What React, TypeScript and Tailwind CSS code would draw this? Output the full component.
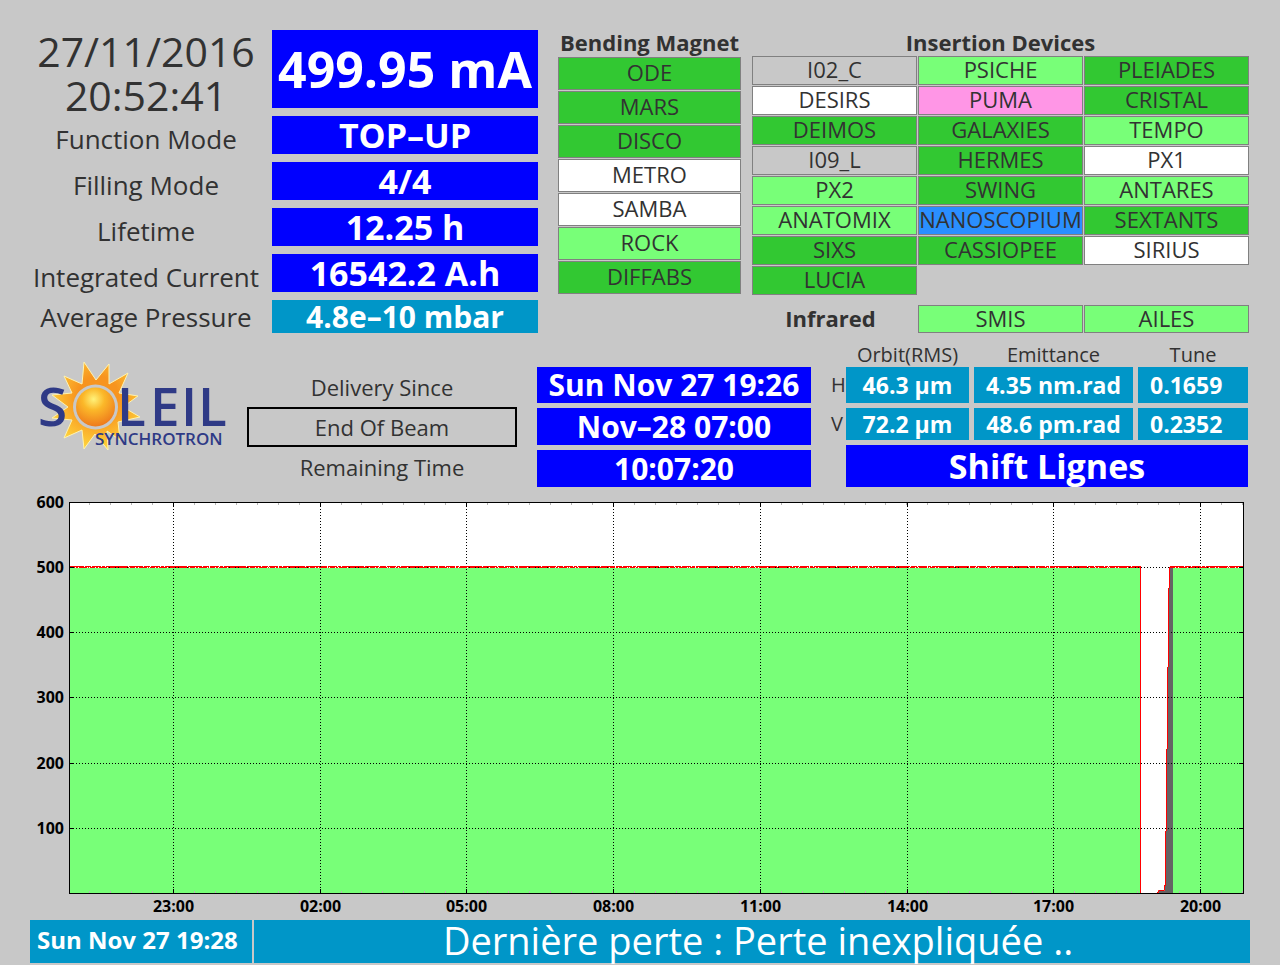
import clsx from "clsx";

type Status = "open" | "ready" | "closed" | "off" | "test" | "special";

interface Beamline {
  name: string;
  status: Status;
}

const statusClass: Record<Status, string> = {
  open: "bg-[#32c832]",
  ready: "bg-[#78ff78]",
  closed: "bg-white",
  off: "bg-[#c8c8c8]",
  test: "bg-[#ff96e6]",
  special: "bg-[#2a8fff]",
};

const machine = [
  { label: "Function Mode", value: "TOP–UP" },
  { label: "Filling Mode", value: "4/4" },
  { label: "Lifetime", value: "12.25 h" },
  { label: "Integrated Current", value: "16542.2 A.h" },
];

const bendingMagnet: Beamline[] = [
  { name: "ODE", status: "open" },
  { name: "MARS", status: "open" },
  { name: "DISCO", status: "open" },
  { name: "METRO", status: "closed" },
  { name: "SAMBA", status: "closed" },
  { name: "ROCK", status: "ready" },
  { name: "DIFFABS", status: "open" },
];

const insertionDevices: Beamline[] = [
  { name: "I02_C", status: "off" },
  { name: "PSICHE", status: "ready" },
  { name: "PLEIADES", status: "open" },
  { name: "DESIRS", status: "closed" },
  { name: "PUMA", status: "test" },
  { name: "CRISTAL", status: "open" },
  { name: "DEIMOS", status: "open" },
  { name: "GALAXIES", status: "open" },
  { name: "TEMPO", status: "ready" },
  { name: "I09_L", status: "off" },
  { name: "HERMES", status: "open" },
  { name: "PX1", status: "closed" },
  { name: "PX2", status: "ready" },
  { name: "SWING", status: "open" },
  { name: "ANTARES", status: "ready" },
  { name: "ANATOMIX", status: "ready" },
  { name: "NANOSCOPIUM", status: "special" },
  { name: "SEXTANTS", status: "open" },
  { name: "SIXS", status: "open" },
  { name: "CASSIOPEE", status: "open" },
  { name: "SIRIUS", status: "closed" },
  { name: "LUCIA", status: "open" },
];

const beamRows = [
  { plane: "H", height: "h-9", orbit: "46.3 µm", emittance: "4.35 nm.rad", tune: "0.1659" },
  { plane: "V", height: "h-8", orbit: "72.2 µm", emittance: "48.6 pm.rad", tune: "0.2352" },
];

const hours = ["23:00", "02:00", "05:00", "08:00", "11:00", "14:00", "17:00", "20:00"];
const levels = [600, 500, 400, 300, 200, 100];

function Cell({ name, status, className }: Beamline & { className: string }) {
  return (
    <div
      className={clsx(
        "flex items-center justify-center border border-[#808080] pb-[3px] text-[22px] leading-none",
        statusClass[status],
        className,
      )}
    >
      {name}
    </div>
  );
}

function Value({ children, className }: { children: string; className: string }) {
  return (
    <div className={clsx("flex items-center justify-center font-bold leading-none whitespace-nowrap text-white", className)}>
      {children}
    </div>
  );
}

function MachineStatus() {
  return (
    <section className="grid grid-cols-[232fr_266fr] gap-x-[10px] gap-y-2">
      <div className="flex h-[78px] flex-col items-center justify-center pt-2 text-[41px] leading-[44px]">
        <span>27/11/2016</span>
        <span>20:52:41</span>
      </div>
      <Value className="bg-[#0000ff] text-[50px]">499.95 mA</Value>
      {machine.map((m) => (
        <div key={m.label} className="contents">
          <div className="flex h-[38px] items-center justify-center pt-2 text-[26px] leading-none font-medium whitespace-nowrap">
            {m.label}
          </div>
          <Value className="bg-[#0000ff] text-[34px]">{m.value}</Value>
        </div>
      ))}
      <div className="flex h-[33px] items-center justify-center text-[26px] leading-none font-medium whitespace-nowrap">
        Average Pressure
      </div>
      <Value className="bg-[#0096c8] text-[30px]">4.8e–10 mbar</Value>
    </section>
  );
}

function Beamlines() {
  return (
    <div className="grid grid-cols-[183fr_497fr] gap-x-[11px] pr-px">
      <section>
        <h2 className="h-[27px] text-center text-[22px] leading-[25px] font-bold whitespace-nowrap">Bending Magnet</h2>
        <div className="grid gap-px">
          {bendingMagnet.map((b) => (
            <Cell key={b.name} {...b} className="h-[33px]" />
          ))}
        </div>
      </section>
      <section>
        <h2 className="h-[26px] text-center text-[22px] leading-[25px] font-bold">Insertion Devices</h2>
        <div className="grid grid-cols-3 gap-px">
          {insertionDevices.map((b) => (
            <Cell key={b.name} {...b} className="h-[29px]" />
          ))}
        </div>
        <div className="mt-[10px] grid grid-cols-3 gap-px">
          <h2 className="pr-2 text-center text-[22px] leading-[26px] font-bold">Infrared</h2>
          <Cell name="SMIS" status="ready" className="h-7" />
          <Cell name="AILES" status="ready" className="h-7" />
        </div>
      </section>
    </div>
  );
}

function Logo() {
  return (
    <svg viewBox="0 0 200 96" className="w-full" role="img" aria-label="Soleil Synchrotron">
      <defs>
        <radialGradient id="ball" cx="0.45" cy="0.3" r="0.7">
          <stop offset="0" stopColor="#fff27a" />
          <stop offset="0.4" stopColor="#fbb829" />
          <stop offset="1" stopColor="#ee7a1c" />
        </radialGradient>
        <radialGradient id="rays" gradientUnits="userSpaceOnUse" cx="68" cy="40" r="52">
          <stop offset="0.4" stopColor="#f7941f" />
          <stop offset="1" stopColor="#ffd43c" />
        </radialGradient>
      </defs>
      <path
        d="M54 5 L66 23 L79 7 L79 27 L98 16 L89 36 L108 39 L93 50 L110 60 L88 65 L90 83 L77 74 L78 93 L65 77 L54 92 L52 73 L34 81 L42 63 L22 61 L38 50 L22 38 L42 36 L34 19 L52 27 Z"
        fill="url(#rays)"
        stroke="#fff3b0"
        strokeWidth="1"
      />
      <circle cx="65.5" cy="50" r="22.5" fill="#c8c8c8" />
      <circle cx="65.5" cy="50" r="19.5" fill="url(#ball)" />
      <g fill="#2f3a86" fontFamily="'Open Sans', sans-serif" fontWeight="600">
        <text x="8" y="69" fontSize="53">S</text>
        <text x="87 120 151 168" y="69" fontSize="53">LEIL</text>
        <text x="65" y="88" fontSize="17">SYNCHROTRON</text>
      </g>
    </svg>
  );
}

function Delivery() {
  return (
    <section className="mt-3 grid grid-cols-[487fr_274fr_419fr] gap-x-5">
      <div className="grid grid-cols-[200fr_17fr_270fr] pt-[12px]">
        <Logo />
        <div />
        <div className="pt-[10px] text-center text-[22px]">
          <div className="h-10 leading-10">Delivery Since</div>
          <div className="h-10 border-2 border-black leading-9">End Of Beam</div>
          <div className="h-10 leading-10">Remaining Time</div>
        </div>
      </div>
      <div className="flex flex-col gap-[5px] pt-[22px]">
        <Value className="h-9 bg-[#0000ff] text-[30px]">Sun Nov 27 19:26</Value>
        <Value className="h-[37px] bg-[#0000ff] text-[30px]">Nov–28 07:00</Value>
        <Value className="h-[37px] bg-[#0000ff] text-[30px]">10:07:20</Value>
      </div>
      <div className="pr-[2px]">
        <table className="block">
          <thead className="block">
            <tr className="grid h-[22px] grid-cols-[10px_123fr_159fr_110fr] gap-x-[5px] text-[20px] leading-[20px]">
              <td />
              <th className="font-normal">Orbit(RMS)</th>
              <th className="font-normal">Emittance</th>
              <th className="font-normal">Tune</th>
            </tr>
          </thead>
          <tbody className="block">
            {beamRows.map((r) => (
              <tr
                key={r.plane}
                className={clsx(
                  "mb-[5px] grid grid-cols-[10px_123fr_159fr_110fr] items-stretch gap-x-[5px] text-[23px] leading-none whitespace-nowrap",
                  r.height,
                )}
              >
                <th className="flex items-center text-[20px] font-normal">{r.plane}</th>
                <td className="flex items-center justify-center bg-[#0096c8] font-bold text-white">{r.orbit}</td>
                <td className="flex items-center justify-center bg-[#0096c8] font-bold text-white">{r.emittance}</td>
                <td className="flex items-center bg-[#0096c8] pl-3 font-bold text-white">{r.tune}</td>
              </tr>
            ))}
          </tbody>
        </table>
        <Value className="ml-[15px] h-[42px] bg-[#0000ff] text-[34px]">Shift Lignes</Value>
      </div>
    </section>
  );
}

function CurrentChart() {
  const x = (i: number) => Math.round(143 + i * 146.7) + 0.5;
  const y = (level: number) => Math.round(398 - level * 0.652) + 0.5;
  const ticks = Array.from({ length: 56 }, (_, i) => Math.round(59 + i * 20.96) + 0.5);

  return (
    <svg viewBox="0 0 1220 425" className="mt-2 block w-full overflow-visible" role="img" aria-label="Beam current, last 24 hours">
      <rect x="39.5" y="7.5" width="1174" height="391" fill="#fff" />
      <path d="M40 73 H1110 V398 H40 Z M1143 73 H1213 V398 H1143 Z" fill="#78ff78" />
      <path d="M1140 73 H1143 V398 H1128 V396 H1135 V336 H1136 V254 H1137 V172 H1138 V93 H1140 Z" fill="#646464" />
      {ticks.map((t) => (
        <path key={t} d={`M${t} 8 V10 M${t} 396 V398`} stroke="#b4b4b4" />
      ))}
      <g stroke="#000" strokeDasharray="1 2">
        {levels.slice(1).map((l) => (
          <path key={l} d={`M40 ${y(l)} H1213`} />
        ))}
        {hours.map((h, i) => (
          <path key={h} d={`M${x(i)} 8 V398`} />
        ))}
      </g>
      <path d="M40 71.5 H1110 M1140 71.5 H1213" stroke="#f00" strokeDasharray="14 1 6 1 9 1 3 1 22 1" />
      <path d="M40 72.5 H1110 M1140 72.5 H1213" stroke="#f00" strokeDasharray="5 1 2 1 8 1 1 1" />
      <path
        d="M1110.5 71 V398 M1127 397.5 H1128.5 V395.5 H1134.5 V390 M1135.5 391 V336 M1136.5 336 V254 M1137.5 254 V172 M1138.5 172 V93 M1139.5 93 V72"
        fill="none"
        stroke="#f00"
      />
      {hours.map((h, i) => (
        <path key={h} d={`M${x(i)} 8 V12 M${x(i)} 394 V398`} stroke="#000" />
      ))}
      {levels.slice(1).map((l) => (
        <path key={l} d={`M40 ${y(l)} H44 M1209 ${y(l)} H1213`} stroke="#000" />
      ))}
      <rect x="39.5" y="7.5" width="1174" height="391" fill="none" stroke="#000" />
      <g fontFamily="'Open Sans', sans-serif" fontSize="16" fontWeight="700" fill="#000">
        {levels.map((l) => (
          <text key={l} x="34" y={y(l) + 5} textAnchor="end">{l}</text>
        ))}
        {hours.map((h, i) => (
          <text key={h} x={x(i)} y="417" textAnchor="middle">{h}</text>
        ))}
      </g>
    </svg>
  );
}

export default function App() {
  return (
    <main className="min-h-screen bg-[#c8c8c8] px-[30px] pt-[30px] font-['Open_Sans',sans-serif] text-[#323232]">
      <div className="grid grid-cols-[508fr_692fr] gap-x-5">
        <MachineStatus />
        <Beamlines />
      </div>
      <Delivery />
      <CurrentChart />
      <footer className="grid h-[43px] grid-cols-[222fr_996fr] gap-x-[2px] text-white">
        <div className="flex items-center bg-[#0096c8] pb-[3px] pl-[7px] text-[24px] leading-none font-bold whitespace-nowrap">
          Sun Nov 27 19:28
        </div>
        <div className="flex items-center justify-center bg-[#0096c8] pb-[3px] pl-3 text-[38px] leading-none">
          Dernière perte : Perte inexpliquée ..
        </div>
      </footer>
    </main>
  );
}
